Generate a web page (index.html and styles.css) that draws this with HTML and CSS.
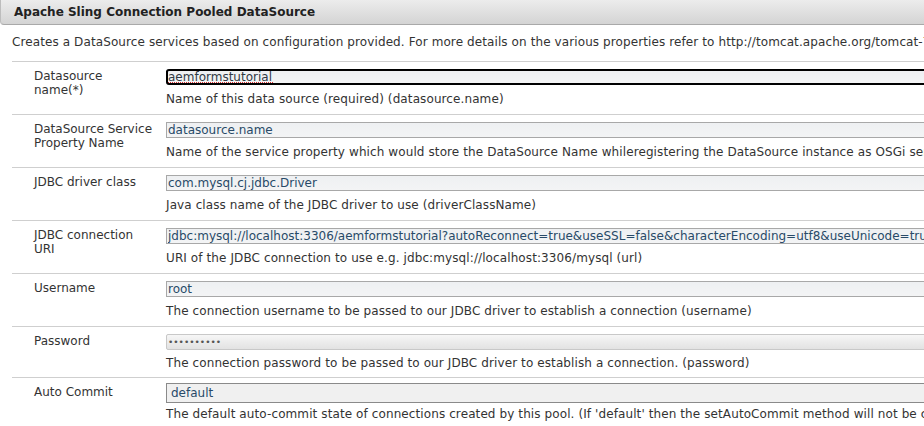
FILE: index.html
```html
<!DOCTYPE html>
<html>
<head>
<meta charset="utf-8">
<link rel="stylesheet" href="styles.css">
</head>
<body>
<div class="panel">
  <div class="titlebar">Apache Sling Connection Pooled DataSource</div>
  <p class="intro">Creates a DataSource services based on configuration provided. For more details on the various properties refer to http://tomcat.apache.org/tomcat-7.0-doc/jdbc-pool.html</p>
  <table class="props">
    <tr>
      <td class="label">Datasource name(*)</td>
      <td class="field"><input class="inp focused" type="text" value="aemformstutorial"><div class="help">Name of this data source (required) (datasource.name)</div></td>
    </tr>
    <tr>
      <td class="label">DataSource Service Property Name</td>
      <td class="field"><input class="inp" type="text" value="datasource.name"><div class="help">Name of the service property which would store the DataSource Name whileregistering the DataSource instance as OSGi service (datasource.svc.prop.name)</div></td>
    </tr>
    <tr>
      <td class="label">JDBC driver class</td>
      <td class="field"><input class="inp" type="text" value="com.mysql.cj.jdbc.Driver"><div class="help">Java class name of the JDBC driver to use (driverClassName)</div></td>
    </tr>
    <tr>
      <td class="label">JDBC connection URI</td>
      <td class="field"><input class="inp" type="text" value="jdbc:mysql://localhost:3306/aemformstutorial?autoReconnect=true&amp;useSSL=false&amp;characterEncoding=utf8&amp;useUnicode=true"><div class="help">URI of the JDBC connection to use e.g. jdbc:mysql://localhost:3306/mysql (url)</div></td>
    </tr>
    <tr>
      <td class="label">Username</td>
      <td class="field"><input class="inp" type="text" value="root"><div class="help">The connection username to be passed to our JDBC driver to establish a connection (username)</div></td>
    </tr>
    <tr class="row-pwd">
      <td class="label">Password</td>
      <td class="field"><input class="inp pwd" type="password" value="xxxxxxxxxx"><div class="help">The connection password to be passed to our JDBC driver to establish a connection. (password)</div></td>
    </tr>
    <tr class="row-sel">
      <td class="label">Auto Commit</td>
      <td class="field"><select class="sel"><option>default</option></select><div class="help">The default auto-commit state of connections created by this pool. (If 'default' then the setAutoCommit method will not be called.) (defaultAutoCommit)</div></td>
    </tr>
  </table>
</div>
</body>
</html>
```

FILE: styles.css
```css
html, body {
  margin: 0;
  padding: 0;
  background: #fff;
  overflow: hidden;
}
body {
  font-family: "DejaVu Sans", sans-serif;
  font-size: 12px;
  color: #333;
  width: 1600px;
}
.titlebar {
  height: 25px;
  line-height: 24px;
  box-sizing: border-box;
  padding-left: 13px;
  font-weight: bold;
  font-size: 12px;
  color: #222;
  background: linear-gradient(#ececec, #d4d4d4);
  border-bottom: 1px solid #a9a9a9;
  border-left: 1px solid #bdbdbd;
  border-bottom-left-radius: 4px;
}
.intro {
  margin: 0;
  padding: 9px 0 0 12px;
  height: 27px;
  line-height: 16px;
  white-space: nowrap;
  letter-spacing: 0.1px;
}
.props {
  margin-left: 12px;
  border-collapse: collapse;
  width: 1580px;
}
.props td {
  border-top: 1px solid #cfcfcf;
  vertical-align: top;
  padding: 0;
}
.props td.label {
  width: 121px;
  padding: 7px 11px 0 22px;
  line-height: 14px;
}
.props td.field {
  padding: 7px 0 7px 0;
}
.inp {
  display: block;
  box-sizing: border-box;
  width: 1300px;
  height: 16px;
  margin: 0;
  padding: 0 0 0 1px;
  border: 1px solid #a8a8a8;
  border-radius: 0;
  background: linear-gradient(#eef0f2, #f3f4f5);
  font-family: "DejaVu Sans", sans-serif;
  font-size: 12px;
  line-height: 14px;
  color: #284a68;
  outline: none;
}
.focused {
  border: 2px solid #000;
  border-radius: 3px;
  padding-left: 0;
  color: #303a44;
  background:
    repeating-linear-gradient(90deg, #d43030 0 1px, transparent 1px 2px) 0 11px / 106px 1px no-repeat,
    linear-gradient(#eef0f2, #f3f4f5);
}
.pwd {
  border-color: #c8c8c8;
  border-radius: 2px;
  background: linear-gradient(#f6f6f6, #e2e2e2);
  color: #555;
  font-size: 9px;
}
.props .row-pwd td.field {
  padding-bottom: 6px;
}
.row-pwd .help {
  margin-top: 5px;
}
.sel {
  display: block;
  box-sizing: border-box;
  width: 1300px;
  height: 20px;
  margin: -2px 0 0 0;
  padding: 0 0 0 4px;
  border: 1px solid #8a8a8a;
  border-radius: 0;
  background: #f0f0f0;
  font-family: "DejaVu Sans", sans-serif;
  font-size: 12px;
  color: #284a68;
  appearance: none;
  -webkit-appearance: none;
}
.row-sel .help {
  margin-top: 3px;
}
.help {
  margin-top: 6px;
  line-height: 16px;
  white-space: nowrap;
  letter-spacing: 0.1px;
}
```
